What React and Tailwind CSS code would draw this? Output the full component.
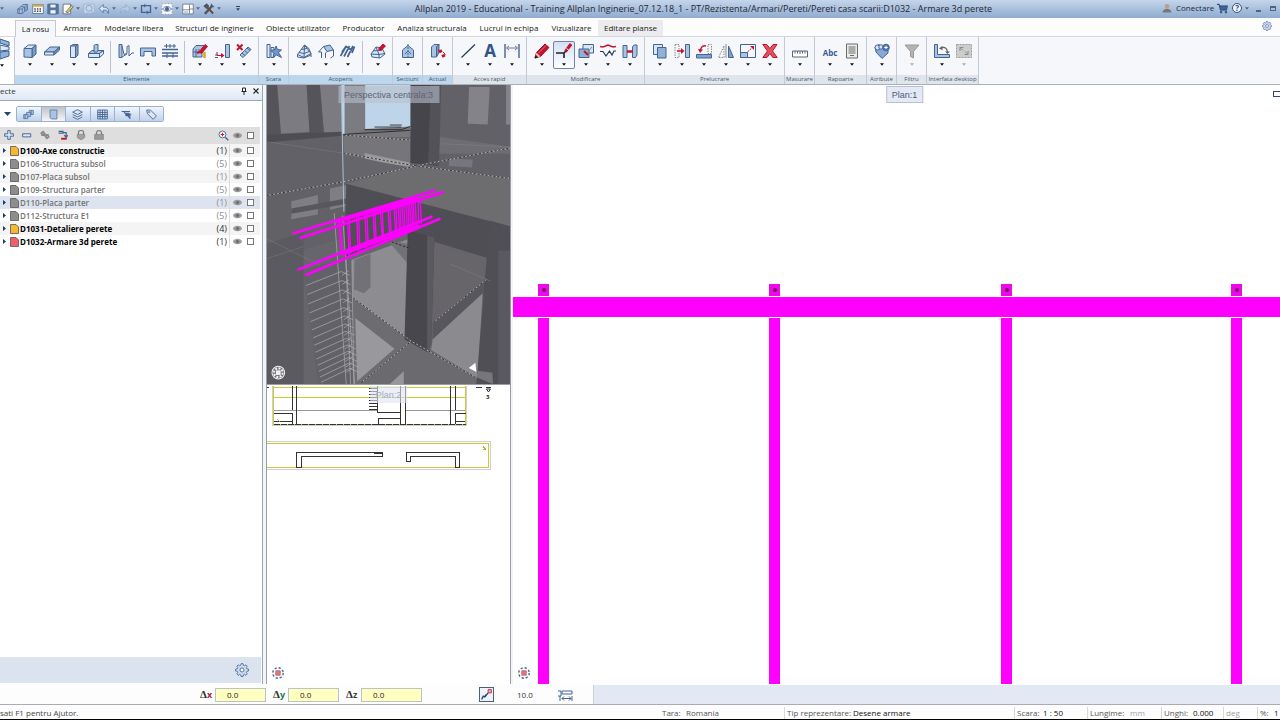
import clsx from "clsx";

const NAVY = "#456491";
const SKY = "#a9c3e2";
const PALE = "#d9e6f5";
const RED = "#c4142f";
const GRAY = "#8b8b8b";

const Icon = ({ children, className = "w-4 h-4", stroke = NAVY, box = "0 0 16 16" }) => (
  <svg viewBox={box} className={clsx("block shrink-0", className)} fill="none" stroke={stroke} strokeWidth="1">
    {children}
  </svg>
);

const Caret = ({ color = "#111" }) => (
  <svg viewBox="0 0 4 3" className="block w-1 h-[3px] shrink-0" fill={color}>
    <path d="M0 .3h4L2 2.7z" />
  </svg>
);

// ribbon glyphs, all on a 16x16 grid
const glyphs = {
  wall: (
    <>
      <path d="M2 5.5L6.500 2H14l-4 3.500z" fill={PALE} />
      <path d="M10 5.500L14 2v9l-4 3.500z" fill="#7d9cc6" />
      <path d="M2 5.500h8v9l-8-.5z" fill={SKY} />
    </>
  ),
  slab: (
    <>
      <path d="M.5 9L6 4h9.500L10 9z" fill={SKY} />
      <path d="M.5 9H10v3H.5z" fill={PALE} />
      <path d="M10 9l5.5-5v3L10 12z" fill="#6d8db8" />
    </>
  ),
  column: (
    <>
      <path d="M4.5 3L7 1.5h5L9.500 3z" fill={PALE} />
      <path d="M4.5 3h5v11.500h-5z" fill={PALE} />
      <path d="M9.500 3L12 1.500V12l-2.500 2.500z" fill="#7d9cc6" />
    </>
  ),
  footing: (
    <>
      <path d="M.5 10.500L4 7.500h11.500l-4 3z" fill={SKY} />
      <path d="M.5 10.500h11v4H.5zM11.500 10.500l4-3v3.500l-4 3.500z" fill={PALE} />
      <path d="M6 9V2.500l1.500-1H10V8L8.500 9z" fill={SKY} />
    </>
  ),
  upstand: (
    <>
      <path d="M1 1.500h3v13H1z" fill={SKY} />
      <path d="M4 3l2 8.500 3-1V3.500l2-1V13l3-3h2M4 14l5-3" />
    </>
  ),
  lintel: <path d="M.5 5h15v8h-3.500V8.500H4V13H.5z" fill={SKY} />,
  grid: (
    <>
      <path d="M0 6.500h16M0 10h16M0 13h16" strokeWidth="1.300" />
      <path d="M4.500 1v4M8 1v4M12 1v4M2 3h12M5 10v5M11 10v5" />
    </>
  ),
  brickPen: (
    <>
      <path d="M1 6l3-3.500h8L10 6v8H1z" fill={SKY} />
      <path d="M1 9h9M4 6v8M7 6v3" />
      <path d="M7 9l6-7.500 2.500 2-6 7z" fill={RED} stroke={RED} />
      <path d="M12.500 9v6" stroke="#d8a82c" strokeWidth="2.500" />
      <path d="M5 10l3-1" stroke={RED} strokeWidth="2" />
    </>
  ),
  extend: (
    <>
      <path d="M11.500 1.500h4v13h-4z" fill={SKY} />
      <path d="M1 12h3M1 14.500h3" />
      <path d="M3 9v3.500h5" stroke={RED} />
      <path d="M7 10l3.500 2.500L7 15z" fill={RED} stroke="none" />
    </>
  ),
  unlink: (
    <>
      <path d="M4 12L12 4l3 2.500-8 8z" fill={SKY} />
      <path d="M6 10l3 2.500M8.500 7.500l3 2.500M11 5l3 2.500" />
      <path d="M1 1.500l5.500 5.500M6.500 1.500L1 7" stroke={RED} strokeWidth="2" />
    </>
  ),
  stair: (
    <>
      <path d="M1 1.500h3v13H1zM5 4.500h3v10H5z" fill={PALE} />
      <path d="M10 3l1.500 3.500 4 .5-3 2.500 3 5-5-2.500-3.500 2.500 1-4L5 7.500l4-1z" fill="#6f96cb" />
    </>
  ),
  roof: (
    <>
      <path d="M8.500 2l-7 9.500 6.500 3 7-4z" fill={PALE} />
      <path d="M8.500 2L8 14.500M5 6.500l6-1M3 9.500l5 1 5-2M8.500 2l4 3 2.500 5.500V14M1.500 11.500V14l6.500 1 7-3" />
    </>
  ),
  roofPanel: (
    <>
      <path d="M5.500 3.500L12 2l3.500 5L9 8.500z" fill={SKY} />
      <path d="M5.500 3.500L.5 9h3v6M9 8.500L7.500 10v5M15.500 7v6l-3 2" />
    </>
  ),
  rafters: <path d="M.5 13L6 3.500M4 13.500L9.500 3M7.500 14L13 3M2 9L6 3.500l6 4M12 10l2.500-6.500" strokeWidth="1.700" />,
  roofPen: (
    <>
      <path d="M1 11l5-7 6 1 3 6-5 4-8-1z" fill={PALE} />
      <path d="M1 11l8 .5 6-1M6 4l3 7.500V15M3 8l9-1" />
      <path d="M8.500 6L13 1l2.500 2-5 5z" fill={RED} stroke={RED} />
    </>
  ),
  section: (
    <>
      <path d="M2.500 7L8 2.500 13.500 7v7.500h-11z" fill={SKY} />
      <path d="M8 1v14" strokeDasharray="2 1" />
      <path d="M5 11l3-3 3 3" />
    </>
  ),
  update: (
    <>
      <path d="M1.500 4L4 1.500h5L6.500 4v10h-5z" fill={SKY} />
      <path d="M6.500 4L9 1.500v8L6.500 14z" fill="#7d9cc6" />
      <path d="M9 9l3-1.500M12 13.500l3-1.500" stroke={RED} strokeWidth="3" />
      <path d="M8 6.500L9.500 9M13 9l2.500 2.500" stroke={RED} />
    </>
  ),
  line: <path d="M1.500 14.500L15 1.500" strokeWidth="1.200" stroke="#25395a" />,
  dimension: (
    <>
      <path d="M1 1v14M15 1v14" strokeWidth="1.400" />
      <path d="M2.500 5h11M5 3L2.500 5 5 7M11 3l2.500 2L11 7" stroke="#6c7e9b" />
    </>
  ),
  pencil: (
    <>
      <path d="M1 15l1.500-5.500L11 1l4 3.500L6.500 13.500z" fill={RED} stroke="#a01028" />
      <path d="M1 15l1.500-5.500 4 4z" fill="#edc9a5" stroke="none" />
      <path d="M1 15l.8-2.500 1.700 1.500z" fill="#222" stroke="#222" />
      <path d="M4.500 10L12 2.500" stroke="#ea7480" />
    </>
  ),
  trim: (
    <>
      <path d="M0 10h8l3-3M8 10v5" stroke="#222" strokeWidth="1.600" />
      <path d="M9.500 8.500L15 1" stroke={RED} strokeWidth="3" />
      <path d="M10.500 5.500l2.500 2" stroke="#eee" />
    </>
  ),
  overlay: (
    <>
      <path d="M5 1.500h10.500V10H5z" fill={PALE} />
      <path d="M1 6h10v8.500H1z" fill="#8fb0d8" />
      <path d="M6 8l4 4" stroke={RED} strokeWidth="2" />
      <path d="M9 10l5-6" stroke={GRAY} />
    </>
  ),
  polyline: (
    <>
      <path d="M0 3.500L3 4l5-2 5 2 3-.5" stroke={RED} strokeWidth="1.500" />
      <path d="M0 8.500h3l3 4.500 3.500-5 2.500 4 2-4h2" stroke="#25395a" strokeWidth="1.200" />
    </>
  ),
  join: (
    <>
      <path d="M1 2.500h4v12H1zM10.500 4L12 2h3v10l-1.500 2.500h-3z" fill={SKY} />
      <path d="M5 8.500h6" stroke={RED} strokeWidth="2.500" />
    </>
  ),
  copy: (
    <>
      <path d="M1.500 1.500h9v10h-9z" fill={PALE} />
      <path d="M5.500 4.500H14V15H5.500z" fill="#91b1d9" />
    </>
  ),
  move: (
    <>
      <path d="M1 1.500h4v13H1z" strokeDasharray="1.500 1" stroke={GRAY} />
      <path d="M11.500 1.500h4v13h-4z" fill={SKY} />
      <path d="M3 8h5" stroke={RED} strokeWidth="1.500" />
      <path d="M7 5l3.500 3L7 11z" fill={RED} stroke="none" />
    </>
  ),
  rotate: (
    <>
      <path d="M.5 11.500h15v3.500H.5z" fill="#7fa3d0" />
      <path d="M12 1.500h3.500v9H12z" strokeDasharray="1.500 1" stroke={GRAY} />
      <path d="M10 3C7 2 5 4 4.500 7" stroke={RED} strokeWidth="1.500" />
      <path d="M2 6l5 .5L4 10z" fill={RED} stroke="none" />
    </>
  ),
  mirror: (
    <>
      <path d="M6 3v11.500H.5z" strokeDasharray="1.500 1" stroke={GRAY} />
      <path d="M8 1v14" stroke={GRAY} />
      <path d="M10.500 3v11.500h5z" fill="#7fa3d0" />
    </>
  ),
  scale: (
    <>
      <path d="M.5 1.500h15v13H.5z" fill="#f4f8fd" />
      <path d="M.5 9.500h7v5h-7z" fill={SKY} />
      <path d="M7.500 9L13 4" stroke={RED} strokeDasharray="2 1" />
      <path d="M10 3h4v4z" fill={RED} stroke="none" />
    </>
  ),
  remove: (
    <path d="M.8 1.500h4L8 5.500l3-4h4L10.500 8l4.700 6.500h-4.400L8 10.500l-3 4H.8L5.500 8z" fill="#e0525c" stroke={RED} />
  ),
  ruler: (
    <>
      <path d="M.5 8h15v6H.5z" fill="#fff" stroke="#59667a" />
      <path d="M3 8v2.500M5.500 8v2.500M8 8v3M10.500 8v2.500M13 8v2.500" stroke="#59667a" />
    </>
  ),
  report: (
    <>
      <path d="M2.500 1h11v14h-11z" fill="#ececec" stroke="#6a6a6a" />
      <path d="M4.500 4h7M4.500 6h7M4.500 8h7M4.500 10h7M6 12.500h4" stroke="#6a6a6a" />
    </>
  ),
  attribute: (
    <>
      <path d="M1 4l4-2.500L8 4l6 2v4l-6 5.500L2 9z" fill="#88a9d6" />
      <circle cx="3.500" cy="4.500" r="2.500" fill={PALE} />
      <circle cx="7" cy="4" r="2.200" fill={PALE} />
      <circle cx="12" cy="4.500" r="3.300" fill="#5077ae" />
      <path d="M12 2.800v3.400M10.300 4.500h3.400" stroke="#fff" />
    </>
  ),
  funnel: <path d="M1 2h14L9.500 8.500V15l-3-1.500v-5z" fill="#b4b4b4" stroke="#989898" />,
  axes: (
    <>
      <path d="M.5 1.500h3v10h12v3H.5z" fill={SKY} />
      <path d="M6.500 5.500c4-2.500 7-.5 7 4.500" stroke="#666" strokeWidth="1.200" />
      <path d="M5 5.500l3.500-2.800v4.500zM11 8.500h5L13.500 11z" fill="#666" stroke="none" />
    </>
  ),
  fullscreen: (
    <>
      <path d="M.5 1.500h15v13H.5z" fill="#cdcdcd" stroke="#9c9c9c" strokeDasharray="2 1" />
      <path d="M4 8V4.500h3.500M4 4.500l3 3M12 8v3.500H8.500M12 11.500l-3-3" stroke="#8a8a8a" />
    </>
  ),
};

const ribbonGroups = [
  { label: "Elemente", tint: true, sets: [["wall", "slab", "column", "footing"], ["upstand", "lintel", "grid"], ["brickPen", "extend", "unlink"]] },
  { label: "Scara", tint: true, sets: [["stair"]] },
  { label: "Acoperis", tint: true, sets: [["roof", "roofPanel", "rafters"], ["roofPen"]] },
  { label: "Sectiuni", tint: true, sets: [["section"]] },
  { label: "Actual", tint: true, sets: [["update"]] },
  { label: "Acces rapid", sets: [["line", "text", "dimension"]] },
  { label: "Modificare", sets: [["pencil", "trim", "overlay", "polyline", "join"]] },
  { label: "Prelucrare", sets: [["copy", "move", "rotate", "mirror", "scale", "remove"]] },
  { label: "Masurare", sets: [["ruler"]] },
  { label: "Rapoarte", sets: [["abc", "report"]] },
  { label: "Atribute", sets: [["attribute"]] },
  { label: "Filtru", sets: [["funnel"]] },
  { label: "Interfata desktop", sets: [["axes", "fullscreen"]] },
];

const RibbonButton = ({ name }) => {
  const active = name === "trim";
  const disabled = name === "funnel" || name === "fullscreen";
  return (
    <button
      type="button"
      aria-label={name}
      className={clsx(
        "w-[22px] h-7 flex flex-col items-center justify-between pt-px pb-[2px] rounded-xs border",
        active ? "border-[#6f86a8] bg-gradient-to-b from-[#d3e1f3] to-white" : "border-transparent"
      )}
    >
      {name === "text" && <span className="h-4 text-[17px] leading-4 font-bold text-[#2f5488]">A</span>}
      {name === "abc" && <span className="h-4 text-[8px] leading-5 font-bold text-[#3a5d92]">Abc</span>}
      {glyphs[name] && <Icon>{glyphs[name]}</Icon>}
      <Caret color={disabled ? "#aaa" : "#111"} />
    </button>
  );
};

const RibbonGroup = ({ group }) => (
  <section className="flex flex-col shrink-0 border-r border-[#c3cad4]">
    <div className="flex grow pt-1 pl-1 pr-[3px]">
      {group.sets.map((set, i) => (
        <div key={i} className="flex">
          {i > 0 && <div className="w-px h-8 ml-[3px] mr-1 bg-[#bcc3cd]" />}
          {set.map((name) => (
            <RibbonButton key={name} name={name} />
          ))}
        </div>
      ))}
    </div>
    <div className={clsx("h-[9px] text-[6px] leading-[9px] text-center whitespace-nowrap text-[#4a5563]", group.tint ? "bg-[#bcd6ee]" : "bg-[#dfe5ed]")}>
      <div className="-mx-1">{group.label}</div>
    </div>
  </section>
);

const tabs = [
  ["La rosu", "w-[41px]"],
  ["Armare", "w-[43px]"],
  ["Modelare libera", "w-[70px]"],
  ["Structuri de inginerie", "w-[91px]"],
  ["Obiecte utilizator", "w-[76px]"],
  ["Producator", "w-[55px]"],
  ["Analiza structurala", "w-[82px]"],
  ["Lucrul in echipa", "w-[72px]"],
  ["Vizualizare", "w-[53px]"],
  ["Editare planse", "w-[65px]"],
];

const quickItems = [
  ["Proiecte", <><path d="M1 8l4-3h5v6l-3 3H1zM5 5l3-3h6v7l-4 2" fill={SKY} /><path d="M1 8h6v6M7 8l3-3M3 8v6M12 2v8" /></>],
  ["Calculator", <><path d="M1 2h14v12H1z" fill="#fff" /><path d="M1 3.500h14" stroke="#d5aa4a" strokeWidth="3" /><path d="M3 8h10M3 11h10" stroke="#444" strokeWidth="2" strokeDasharray="2 1.500" /></>],
  ["Salvare", <><path d="M1 1.500h14v13H1z" fill="#59779f" /><path d="M4 1.500h8v5H4zM4 9h8v5.500H4z" fill="#eef3f9" /></>],
  ["Editare", <><path d="M1.500 1.500h10v13h-10z" fill="#fff" stroke="#555" /><path d="M5 12l8-9 2 2-7 8z" fill="#eccb65" stroke="#555" /></>, true],
  ["Cautare", <><path d="M1 1.500h14v12H1z" stroke="#9db2cf" fill="#c6d5e8" /><circle cx="8" cy="7" r="4" stroke="#7d9bc2" /><path d="M11 10l3 4" stroke="#7d9bc2" /></>],
  ["Anulare", <path d="M7 2L1.500 7.500 7 13V9.500c4-1 6 1 6.500 4.500C15.500 8 12 5.500 7 5.500z" fill={PALE} />, true],
  ["Refacere", <path d="M9 2l5.500 5.500L9 13V9.500C5 8.500 3 10.500 2.500 14 .500 8 4 5.500 9 5.500z" fill="#b9cbe2" stroke="#8fa9cb" />, true],
  ["Repetare", <><path d="M5 3.500H2v9h8M11 12.500h3v-9H6" strokeWidth="1.800" /><path d="M9 10l3.500 2.500L9 15zM7 1L3.500 3.500 7 6z" fill={NAVY} stroke="none" /></>, true],
  ["Vizibilitate", <><path d="M1 1h14v14H1z" fill="#fff" stroke="#888" strokeDasharray="2 2" /><path d="M2 8c3-4.500 9-4.500 12 0-3 4-9 4-12 0z" fill={PALE} /><circle cx="8" cy="8" r="2.300" fill={NAVY} /></>, true],
  ["Ferestre", <><path d="M1 1.500h14v13H1z" fill="#fff" stroke="#667" /><path d="M10 2v12M10 8h5M1 9h9" stroke="#667" /><path d="M2.500 11h6v2h-6z" fill={SKY} stroke="none" /></>, true],
  ["Unelte", <><path d="M2.500 14.500L12 4" stroke="#4c5564" strokeWidth="3" /><path d="M4 4l9.500 10" stroke="#6d4a35" strokeWidth="2.500" /><path d="M1 4l4-3 3 3-3.500 3.500zM11 1v4h4" fill="#4c5564" stroke="#4c5564" /></>, true],
];

const TitleBar = () => (
  <header className="h-[18px] shrink-0 flex items-center bg-gradient-to-b from-[#c5d6eb] via-[#a9c0dd] to-[#8fabd0]">
    <div className="w-[245px] shrink-0 flex items-center pb-px">
      <div className="w-[15px] h-4 flex items-center">
        <Caret color="#556a88" />
      </div>
      {quickItems.map(([label, art, drop]) => (
        <div key={label} className="flex">
          <button type="button" aria-label={label} className="w-[15px] h-4 flex items-center justify-center">
            <Icon className="w-3 h-3">{art}</Icon>
          </button>
          {drop && (
            <button type="button" aria-label={label + " optiuni"} className="w-[6px] h-4 flex items-center justify-center">
              <Caret color="#556a88" />
            </button>
          )}
        </div>
      ))}
      <button type="button" aria-label="Personalizare" className="ml-[14px] h-4 flex flex-col justify-center gap-px items-center">
        <span className="w-1 h-px bg-[#33445e]" />
        <Caret color="#33445e" />
      </button>
    </div>
    <h1 className="grow min-w-0 text-center whitespace-nowrap text-[9px] leading-4 text-[#1f2733]">
      Allplan 2019 - Educational - Training Allplan Inginerie_07.12.18_1 - PT/Rezistenta/Armari/Pereti/Pereti casa scarii:D1032 - Armare 3d perete
    </h1>
    <div className="w-[118px] shrink-0 flex items-center pb-[2px]">
      <button type="button" className="flex items-center gap-1 text-[8px] leading-4 text-[#1d2a3d]">
        <Icon className="w-[10px] h-[10px]" stroke="none">
          <circle cx="8" cy="5" r="3.500" fill="#b79f92" />
          <path d="M1 15c0-8 14-8 14 0z" fill="#7a7673" />
        </Icon>
        Conectare
      </button>
      <button type="button" aria-label="Cos" className="ml-[3px]">
        <Icon className="w-[11px] h-[11px]" stroke="#33507d">
          <path d="M0 2h3l2 8h9" strokeWidth="1.500" />
          <path d="M4 4h11.500l-1.500 6H5z" fill="#40608f" />
          <path d="M5 12h2v2.500H5zM12 12h2v2.500h-2z" fill="#33507d" />
        </Icon>
      </button>
      <button type="button" aria-label="Ajutor" className="ml-1 w-[10px] h-[10px] rounded-full border border-[#35527f] bg-[#eff4fa] text-[8px] leading-[8px] font-bold text-[#35527f]">
        ?
      </button>
      <span className="ml-[3px]">
        <Caret color="#556a88" />
      </span>
      <button type="button" aria-label="Minimizare" className="ml-[7px] mt-1 w-[5px] h-[3px] border-b-2 border-[#4b648a]" />
      <button type="button" aria-label="Restaurare" className="ml-[9px] w-[6px] h-[5px] border border-t-2 border-[#4b648a]" />
    </div>
  </header>
);

const Gear = ({ className }) => (
  <Icon className={className}>
    <path
      d="M6.800 1h2.400l.4 2 1.500.6 1.700-1.100 1.700 1.700-1.100 1.700.6 1.500 2 .4v2.400l-2 .4-.6 1.500 1.100 1.700-1.700 1.700-1.700-1.100-1.500.6-.4 2H6.800l-.4-2-1.500-.6-1.700 1.100-1.700-1.700 1.100-1.700L2 10.600l-2-.4V7.800l2-.4.6-1.500-1.100-1.700 1.700-1.700 1.700 1.100 1.500-.6z"
      fill="#c9dbf0"
      transform="translate(.7 -.2) scale(.92)"
    />
    <circle cx="8" cy="8" r="2.300" fill="#fff" />
  </Icon>
);

const Ribbon = () => (
  <div className="shrink-0 bg-[#fdfdfe]">
    <nav className="h-[18px] pt-[2px] pl-[15px] flex text-[8px] text-[#222]">
      {tabs.map(([name, width], i) => (
        <button
          key={name}
          type="button"
          className={clsx(
            width,
            "text-center whitespace-nowrap shrink-0",
            i === 0 ? "relative z-10 h-[17px] leading-[14px] bg-[#f5f7fb] border border-b-0 border-[#c3cad4]" : "h-4 leading-4",
            i === tabs.length - 1 && "bg-[#ececee]"
          )}
        >
          {name}
        </button>
      ))}
      <button type="button" aria-label="Setari" className="ml-auto mr-2 mb-1">
        <Gear className="w-[10px] h-[10px]" />
      </button>
    </nav>
    <div className="h-[49px] flex bg-[#f5f7fb] border-t border-t-[#d3d8e0] border-b border-b-[#a9b0ba]">
      <button type="button" aria-label="Allplan" className="w-[15px] shrink-0 bg-white border-r border-[#c3cad4] flex flex-col justify-between pt-px pb-[17px]">
        <svg viewBox="0 0 10 22" className="w-[10px] h-[22px]" stroke="#3c5f8f">
          <path d="M0 1l9 3v4L0 5zM0 14l9-1v5l-9 3z" fill="#8fb2da" />
          <path d="M0 7l9 2v3l-9 1z" fill="#dbe8f6" />
        </svg>
        <Caret />
      </button>
      {ribbonGroups.map((group) => (
        <RibbonGroup key={group.label} group={group} />
      ))}
    </div>
  </div>
);

const viewModes = [
  ["Structura", <><path d="M1 8h6v6H1zM5 5h6v6H7M9 2h6v6h-4" fill={SKY} /><path d="M3 8v6M5 5v3M9 2v3M12 2v6" /></>],
  ["Desene", <path d="M3 1.500h10v13H5L3 12.500z" fill={SKY} />],
  ["Layere", <path d="M1 4.500L8 1l7 3.500L8 8zM1 8l7 3.500L15 8M1 11.500L8 15l7-3.500" fill={PALE} strokeWidth="1.300" />],
  ["Planuri", <path d="M1 1.500h14v13H1zM4.500 1.500v13M8 1.500v13M11.500 1.500v13M1 5h14M1 8h14M1 11h14" strokeWidth="1.300" />],
  ["Conexiuni", <><path d="M1 3.500h12M4 3.500l3 4h8M9 8l4 6M13 8v6" strokeWidth="1.500" /><path d="M7 6h5v4H7z" fill={NAVY} /></>],
  ["Etichete", <><path d="M1 1.500h5.500L15 10l-4.500 5L2 7z" fill={PALE} strokeWidth="1.300" /><circle cx="4.500" cy="4.500" r="1" /></>],
];

const drawings = [
  { name: "D100-Axe constructie", count: 1, color: "#f5b82e", on: true },
  { name: "D106-Structura subsol", count: 5, color: "#8d8d8d" },
  { name: "D107-Placa subsol", count: 1, color: "#8d8d8d" },
  { name: "D109-Structura parter", count: 5, color: "#8d8d8d" },
  { name: "D110-Placa parter", count: 1, color: "#8d8d8d", selected: true },
  { name: "D112-Structura E1", count: 5, color: "#8d8d8d" },
  { name: "D1031-Detaliere perete", count: 4, color: "#f5b82e", on: true },
  { name: "D1032-Armare 3d perete", count: 1, color: "#f0606c", on: true },
];

const Eye = () => (
  <Icon className="w-[9px] h-[9px]" stroke="#848484">
    <path d="M0 8c3-5.500 13-5.500 16 0-3 5.500-13 5.500-16 0z" fill="#a2a2a2" />
    <circle cx="8" cy="8" r="3" fill="#6d6d6d" />
  </Icon>
);

const Tick = ({ label }) => (
  <input type="checkbox" aria-label={label} className="appearance-none block w-[7px] h-[7px] border border-[#777] bg-white" />
);

const DrawingRow = ({ item, index }) => (
  <li className={clsx("h-[13px] flex items-center text-[9px]", item.selected ? "bg-[#dde4ef]" : index % 2 ? "bg-white" : "bg-[#f4f4f4]")}>
    <button type="button" aria-label={"Extinde " + item.name} className="w-[10px] pl-[3px]">
      <svg viewBox="0 0 3 5" className="block w-[3px] h-[5px]" fill="#1f3a66">
        <path d="M0 0v5l3-2.500z" />
      </svg>
    </button>
    <svg viewBox="0 0 9 10" className="block w-[9px] h-[10px]" stroke="#555" strokeWidth=".8">
      <path d="M.5.5H6L8.500 3v6.500h-8z" fill={item.color} />
    </svg>
    <span className={clsx("ml-px grow text-[8px] leading-3 whitespace-nowrap", item.on ? "font-bold text-black" : "font-semibold text-[#727272]")}>
      {item.name}
    </span>
    <span className={clsx("w-3 mr-[2px] leading-3 text-right", item.on ? "text-[#333]" : "text-[#8d8d8d]")}>({item.count})</span>
    <div className="h-full pl-[3px] pr-[6px] flex items-center gap-[5px] border-l border-[#dcdcdc]">
      <Eye />
      <Tick label={item.name} />
    </div>
  </li>
);

const SidePanel = () => (
  <aside className="w-[263px] shrink-0 flex flex-col border-r border-[#9aa8bd] bg-white">
    <div className="h-[15px] shrink-0 flex items-center pb-[3px] bg-gradient-to-b from-[#f6f9fd] to-[#dfe8f4] text-[8px] text-[#333]">
      <h2 className="grow">ecte</h2>
      <button type="button" aria-label="Fixeaza" className="mr-[5px]">
        <Icon className="w-2 h-2" stroke="#222" box="0 0 8 8">
          <path d="M2.500 1h3v3.500h-3zM1.500 4.500h5M4 4.500V8" />
        </Icon>
      </button>
      <button type="button" aria-label="Inchide" className="mr-[3px]">
        <Icon className="w-[6px] h-[6px]" stroke="#222" box="0 0 6 6">
          <path d="M.5.5l5 5M5.500.5l-5 5" strokeWidth="1.200" />
        </Icon>
      </button>
    </div>
    <div className="h-[27px] shrink-0 flex items-center border-t border-[#9aa8bd]">
      <button type="button" aria-label="Mod" className="w-4 pl-1">
        <svg viewBox="0 0 7 4" className="block w-[7px] h-1" fill="#234373">
          <path d="M0 0h7L3.500 4z" />
        </svg>
      </button>
      <div className="w-[148px] h-4 flex rounded-xs border border-[#9fb2cd] divide-x divide-[#9fb2cd] overflow-hidden">
        {viewModes.map(([label, art], i) => (
          <button
            key={label}
            type="button"
            aria-label={label}
            className={clsx("grow flex items-center justify-center bg-gradient-to-b", i === 1 ? "from-[#bfc3c9] to-[#f6f6f6]" : "from-[#f0f5fc] to-[#bfd2ec]")}
          >
            <Icon className="w-[11px] h-[11px]">{art}</Icon>
          </button>
        ))}
      </div>
    </div>
    <div className="h-[17px] shrink-0 flex items-center pb-px mr-[2px] pl-1 pr-[6px] bg-[#dedede]">
      <div className="grow flex items-center gap-[8px]">
        <Icon className="w-[10px] h-[10px]">
          <path d="M6 1h4v5h5v4h-5v5H6v-5H1V6h5z" fill={PALE} strokeWidth="1.500" />
        </Icon>
        <Icon className="w-[10px] h-[10px]">
          <path d="M1 6h13v5H1z" fill={PALE} strokeWidth="1.500" />
        </Icon>
        <Icon className="w-[10px] h-[10px]" stroke="#8a8a8a">
          <path d="M1 6l4-3 3 4M2 8h6M15 10l-4 3-3-4M8 8h6" strokeWidth="3" />
        </Icon>
        <Icon className="w-[10px] h-[10px]">
          <path d="M1 2h7v3H1M8 4h5v7M10 8l3 4 3-4" strokeWidth="2" />
          <path d="M5 14h9" stroke={RED} strokeWidth="3" />
        </Icon>
        <Icon className="w-[10px] h-[10px]" stroke="#7c7c7c">
          <path d="M2 7h12v5l-6 4-6-4z" fill="#a1a1a1" />
          <path d="M4 7V3c1-3 7-3 8 0v4" strokeWidth="2" />
        </Icon>
        <Icon className="w-[10px] h-[10px]" stroke="#7c7c7c">
          <path d="M1 7h14v8H1z" fill="#999" />
          <path d="M4 7V4c1-4 7-4 8 0v3" strokeWidth="2" />
        </Icon>
      </div>
      <Icon className="w-[11px] h-[11px] mr-[4px]">
        <circle cx="6.500" cy="6.500" r="5" fill="#fff" strokeWidth="1.300" />
        <path d="M10.500 10.500l4.500 4.500" strokeWidth="2" />
        <path d="M4 6.500h5M6.500 4v5" stroke={RED} strokeWidth="1.500" />
      </Icon>
      <div className="flex items-center gap-[5px]">
        <Eye />
        <Tick label="Toate" />
      </div>
    </div>
    <ul className="grow mr-[2px]">
      {drawings.map((item, i) => (
        <DrawingRow key={item.name} item={item} index={i} />
      ))}
    </ul>
    <div className="h-[26px] shrink-0 mr-px mb-px pr-3 flex items-center justify-end bg-[#dbe3ef]">
      <button type="button" aria-label="Optiuni">
        <Gear className="w-[14px] h-[14px]" />
      </button>
    </div>
  </aside>
);

const stirrups = [
  [222, 402, 230, 512],
  [248, 396, 254, 515],
  [276, 390, 281, 503],
  [301, 384, 306, 492],
  [325, 378, 331, 480],
  [347, 373, 354, 470],
  [370, 368, 376, 462],
  [388, 363, 394, 454],
  [400, 360, 406, 450],
  [412, 357, 417, 446],
  [424, 354, 429, 442],
  [435, 351, 440, 438],
  [446, 348, 450, 435],
  [461, 344, 463, 428],
];

const rungs = [595, 622, 650, 677, 703, 728, 752, 774, 795, 815, 834, 852, 869, 885];

const PerspectiveView = () => (
  <svg viewBox="7 4 730 896" preserveAspectRatio="none" className="block w-full h-full bg-[#66656b]">
    <path d="M7 4H232V295L7 335z" fill="#626167" />
    <path d="M38 4h88l9 140-87 6zM165 4h67v142l-54 2z" fill="#7c7b81" />
    <path d="M7 4h30l12 148H7zM126 4h40l12 144h-43z" fill="#55545a" />
    <path d="M7 152l225-8v12L7 176z" fill="#4e4d53" />
    <path d="M232 4h206v130l-206 18z" fill="#bed4e8" />
    <path d="M240 4h62v146h-62z" fill="#7b7c82" />
    <path d="M302 136l135-8v32H236l2-8z" fill="#77777b" />
    <path d="M236 156l201 8v82L238 212z" fill="#76767a" />
    <path d="M300 208l135 28v14l-80-14-55-12z" fill="#9a9a9d" />
    <path d="M438 4h299v280l-297-40z" fill="#626167" />
    <path d="M440 4h60l-8 240-54-6z" fill="#46454b" />
    <path d="M498 4h32l-6 244-32-4z" fill="#535258" />
    <path d="M614 10h62l-6 112-60-2zM725 4h12v118h-12z" fill="#84838a" />
    <path d="M527 160l210 28v22H525z" fill="#6e6d73" />
    <path d="M555 225l70 2-2 24-70-4z" fill="#77767c" />
    <path d="M7 335l235-42 195-43 300 35v143L246 300v160L7 528z" fill="#626166" />
    <path d="M245 300l195-53 297 38v142z" fill="#6d6d70" />
    <path d="M80 352l80-18v58l-80 14zM196 314l58-12v62l-58 14z" fill="#7f7e84" />
    <path d="M80 374l176-32v16L80 390z" fill="#58575d" />
    <path d="M245 300l492 128v115L430 450l-190 70z" fill="#4f4e54" />
    <path d="M7 480l110-35v455H7z" fill="#5b5a60" />
    <path d="M117 560l130-42 16 382H160z" fill="#626167" />
    <path d="M262 528l168-62-8 300-157-124z" fill="#8d8c91" />
    <path d="M270 528l48-18v100l-20 18-30-12z" fill="#727177" />
    <path d="M370 470l60 10v60z" fill="#727177" />
    <path d="M266 645l175 127-150 128h-22z" fill="#6d6c71" />
    <path d="M272 702l118 92-112 98z" fill="#99989d" />
    <path d="M441 772l195 112v16H290z" fill="#6b6a6f" />
    <path d="M376 900l42-38v38z" fill="#97979b" />
    <path d="M508 480l168 55-10 52-158 130z" fill="#676569" />
    <path d="M505 716l160-130 12 40-172 140z" fill="#58575d" />
    <path d="M505 766l150-138-16 254-139-84z" fill="#8b8a8f" />
    <path d="M430 440l80 20-10 320-12 24-68-38z" fill="#48474d" />
    <path d="M488 455l22 5-10 320-12 24z" fill="#5a595f" />
    <path d="M676 410l61 18v472H636z" fill="#504f55" />
    <path d="M702 500h35v400h-35z" fill="#5a595f" />
    <path d="M613 852l20-16 3 28z" fill="#fff" />
    <path d="M640 860l44 6 2 34-50-20z" fill="#77767b" />
    <g fill="none" strokeWidth="2.500">
      <g stroke="#c4c4c6">
        <path d="M236 154l201 15M236 208l204 36 297 40M7 335l235-42 250-54 245-46" />
        <path d="M266 642l175 130 195 110M290 896l150-124M508 715l158-128" />
      </g>
      <g stroke="#1a1a1a" strokeDasharray="7 5">
        <path d="M236 154l201 15M236 208l204 36 297 40M7 335l235-42 250-54 245-46" />
        <path d="M266 642l175 130 195 110M290 896l150-124M508 715l158-128M370 470l62 22" />
      </g>
      <path d="M300 138h110l28-10M330 130h80M376 124h36M236 152l200-12" stroke="#222" />
      <path d="M7 174l228 34M530 180l207 10M7 524l110-36M7 465l160 80M560 542l120 50" stroke="#8d8c92" strokeWidth="1" />
    </g>
    <path d="M230 4l8 380" stroke="#a9bfce" strokeWidth="3" />
    <g stroke="#b0b0b3" strokeWidth="2" fill="none">
      <path d="M209 388l36 512M234 395l36 505M244 520l14 380M262 530l6 370" />
      {rungs.map((y, i) => (
        <path key={y} d={`M${124 + i * 3.5} ${y + 10}l${106 - i * 1.5} -42l26 12M${232 + i} ${y - 20}l20 -14`} />
      ))}
    </g>
    <g stroke="#ff00ff" fill="none">
      <path d="M84 449l428-129M105 463l432-138M99 558l405-160M122 574l406-170" strokeWidth="8" />
      <path d="M212 414l250-70M230 512l234-86" strokeWidth="10" />
      {stirrups.map(([x1, y1, x2, y2]) => (
        <path key={x1} d={`M${x1} ${y1}L${x2} ${y2}M${x1 + 6} ${y1}l4 ${y2 - y1 - 6}`} strokeWidth="4" />
      ))}
    </g>
    <g>
      <circle cx="41" cy="866" r="19" fill="#73747b" stroke="#f0f0f0" strokeWidth="3" />
      <circle cx="41" cy="866" r="13" fill="none" stroke="#f0f0f0" strokeWidth="6" strokeDasharray="6 4" />
      <path d="M34 859h14v14H34z" fill="#f0f0f0" />
    </g>
  </svg>
);

const SectionView = () => (
  <svg className="block w-full h-full bg-white" fill="none" stroke="#333" shapeRendering="crispEdges">
    <path d="M5.500 .5v40h194V.5" stroke="#cfcfd4" />
    <path d="M6.500 1v38.500h192V1M7 12.500h191M7 2.500h191" stroke="#cccc30" />
    <path d="M7 25.500h104M139 25.500h59" stroke="#999" />
    <path d="M25.500 1v24M29.500 1v38M110.500 1v26h22M133.500 1v38M138.500 1v38M183.500 1v38M188.500 1v24" />
    <path d="M7 28.500h18v10M111 39.500v-6h22M188 39v-10.500h11M188 36.500h10M7 36.500h18" />
    <path d="M7 39.500h192" strokeDasharray="6 1" />
    <path d="M102 3.500h9M102 6.500h9M102 9.500h9M102 12.500h9M102 15.500h9M102 18.500h9M102 21.500h9M102 24.500h9" />
    <path d="M209 2.500h6M219 2.500h5M0 2.500h2" />
    <path d="M219.500 4h4l-2 3z" shapeRendering="auto" />
    <text x="219" y="14" fontSize="6" fontWeight="bold" fill="#222" stroke="none">
      3
    </text>
    <path d="M0 56.500h223.500v28H0" stroke="#cfcfd4" />
    <path d="M0 58.500h221.500v24H0" stroke="#cccc30" />
    <path d="M216 61l3 4M10 34l3 3M216 65l3-2" stroke="#b5b52a" />
    <path d="M29.500 83V67.500h86v4M34.500 83V71.500h81M29 82.500h6" />
    <path d="M107 68.500h8" />
    <path d="M139.500 76.500v-9h53V83M139 76.500h4v-5h45V83M188 82.500h5" />
  </svg>
);

const bars = [25, 256, 488, 718];

const PlanView = () => (
  <svg className="block w-full h-full bg-white" shapeRendering="crispEdges">
    {bars.map((x) => (
      <g key={x}>
        <rect x={x} y="199" width="11" height="12" fill="#ec08e8" />
        <circle cx={x + 6} cy="205" r="2" fill="#7d0a62" shapeRendering="auto" />
        <rect x={x} y="233" width="11" height="100%" fill="#ff00ff" />
      </g>
    ))}
    <rect x="0" y="212" width="100%" height="20" fill="#ff00ff" />
  </svg>
);

const ViewLabel = ({ children, className }) => (
  <span className={clsx("absolute left-1/2 -translate-x-1/2 h-[17px] px-[5px] leading-4 border whitespace-nowrap font-['Liberation_Sans',sans-serif] text-[9px]", className)}>
    {children}
  </span>
);

const NavWheel = () => (
  <button type="button" aria-label="Navigare" className="absolute left-[5px] bottom-[5px]">
    <Icon className="w-3 h-3">
      <circle cx="8" cy="8" r="7" strokeWidth="1.800" strokeDasharray="3 2.500" />
      <path d="M5 5h6v6H5z" fill="#e2777c" stroke="#b95a60" />
    </Icon>
  </button>
);

const DeltaField = ({ axis, color, width, className }) => (
  <label className={clsx("flex items-center font-['Liberation_Serif',serif] text-[11px] font-bold text-[#333]", className)}>
    <span className="w-[15px]">
      Δ<span className={clsx("font-['Open_Sans',sans-serif] text-[9px]", color)}>{axis}</span>
    </span>
    <input
      type="text"
      defaultValue="0.0"
      className={clsx("h-[14px] pl-[11px] bg-[#ffffc0] border border-[#b9c3c9] font-['Open_Sans',sans-serif] text-[8px] font-normal text-[#222]", width)}
    />
  </label>
);

const InputBar = () => (
  <div className="h-5 shrink-0 flex items-center pt-px bg-[#fdfdfd] text-[8px] text-[#333]">
    <div className="flex items-center w-[593px] shrink-0">
      <DeltaField axis="x" color="text-[#b0183a]" width="w-[51px]" className="ml-[200px]" />
      <DeltaField axis="y" color="text-[#2c7a40]" width="w-[51px]" className="ml-[7px]" />
      <DeltaField axis="z" color="text-[#444]" width="w-[61px]" className="ml-[7px]" />
      <button type="button" aria-label="Punct relativ" className="ml-[57px] w-[15px] h-[15px] flex items-center justify-center border border-[#4c5f7d] bg-[#eef3fa]">
        <Icon className="w-[13px] h-[13px]" stroke="#223f70">
          <path d="M2 14l2-4 2 1 4-5M6 11l1-3" strokeWidth="1.500" />
          <path d="M10 2h4v4h-4z" fill="#f2b2b8" stroke={RED} />
        </Icon>
      </button>
      <span className="ml-[23px] w-10">10.0</span>
      <Icon className="w-4 h-4">
        <path d="M1 4h3v5H1M5 4h10v3H5zM3 9v5M5 11.500h9M7 9.500l-2 2 2 2M12 9.500l2 2-2 2M15 9v5" />
      </Icon>
    </div>
    <div className="grow h-full bg-[#e2e9f5] border-l border-[#c8cfda]" />
  </div>
);

const StatusCell = ({ label, value, width, gap, faint }) => (
  <div className={clsx("h-3 pl-[2px] flex items-center border-l border-[#d8d8d8] overflow-hidden whitespace-nowrap shrink-0", width)}>
    <span className={clsx("shrink-0", gap, label === "deg" ? "text-[#a0a0a0]" : "text-[#555]")}>{label}</span>
    <span className={faint ? "text-[#a0a0a0]" : "text-[#111]"}>{value}</span>
  </div>
);

const StatusBar = () => (
  <footer className="h-4 shrink-0 flex items-center pt-px border-t border-t-[#a8adb5] border-b border-b-black bg-[#fdfdfd] text-[8px]">
    <p className="grow min-w-0 whitespace-nowrap text-[#444]">sati F1 pentru Ajutor.</p>
    <div className="w-[122px] shrink-0 flex text-[#555]">
      <span className="w-6">Tara:</span>
      <span>Romania</span>
    </div>
    <StatusCell label="Tip reprezentare:" value="Desene armare" width="w-[230px]" gap="w-[66px]" />
    <StatusCell label="Scara:" value="1 : 50" width="w-[73px]" gap="w-[26px]" />
    <StatusCell label="Lungime:" value="mm" width="w-[74px]" gap="w-[40px]" faint />
    <StatusCell label="Unghi:" value="0.000" width="w-[62px]" gap="w-[29px]" />
    <StatusCell label="deg" value="" width="w-[34px]" gap="" />
    <StatusCell label="%:" value="1" width="w-[23px]" gap="w-[14px]" />
  </footer>
);

export default function App() {
  return (
    <div className="h-screen flex flex-col overflow-hidden bg-white font-['Open_Sans','Noto_Sans',sans-serif]">
      <TitleBar />
      <Ribbon />
      <main className="grow min-h-0 flex overflow-hidden bg-[#f3f4f6]">
        <SidePanel />
        <div className="w-[245px] shrink-0 ml-[3px] mr-[2px] flex flex-col border-x border-[#9a9ea8]">
          <div className="relative grow basis-0 min-h-0 border-b border-[#9a9ea8]">
            <PerspectiveView />
            <ViewLabel className="top-px border-transparent bg-[#b9c0cb]/60 text-[#5a6475]">Perspectiva centrala:3</ViewLabel>
          </div>
          <div className="relative grow basis-0 min-h-0">
            <SectionView />
            <ViewLabel className="top-px border-transparent bg-[#dfe4f2]/60 text-[#a0a9c0]">Plan:2</ViewLabel>
            <NavWheel />
          </div>
        </div>
        {/* the drawing window runs past the right screen edge */}
        <div className="relative grow min-w-0 -mr-4">
          <PlanView />
          <ViewLabel className="top-px border-[#b8c2d4] bg-[#e4e9f5] text-[#4c5a78]">Plan:1</ViewLabel>
          <button type="button" aria-label="Maximizare" className="absolute right-3 top-[6px] w-[11px] h-[6px] border border-[#33466e]" />
          <NavWheel />
        </div>
      </main>
      <InputBar />
      <StatusBar />
    </div>
  );
}
